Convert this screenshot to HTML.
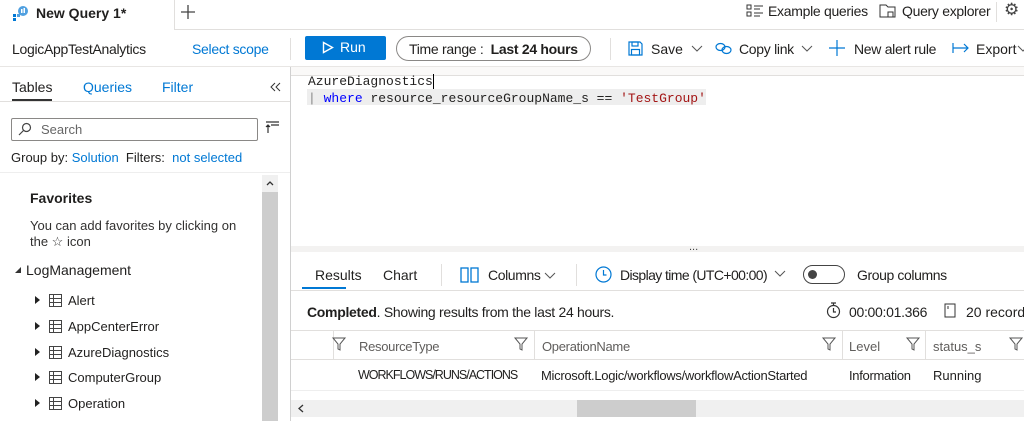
<!DOCTYPE html><html><head><style>
body{margin:0;width:1024px;height:421px;overflow:hidden;background:#fff;font-family:"Liberation Sans",sans-serif;color:#201f1e;position:relative}
.a{position:absolute;white-space:nowrap}
.b{color:#0078d4}
.m{font-family:"Liberation Mono",monospace;font-size:13px}
.s13{font-size:13px}.s14{font-size:14px}
.hl{position:absolute;height:1px;background:#e1dfdd}
.vl{position:absolute;width:1px;background:#e1dfdd}
svg{position:absolute}
.tr{position:absolute;left:33px;font-size:13px;white-space:nowrap}
</style></head><body>
<div class="hl" style="left:174px;top:29px;width:850px"></div>
<div class="vl" style="left:174px;top:0;height:30px"></div>
<svg style="left:12px;top:5px" width="16" height="16" viewBox="0 0 16 16"><rect x="1" y="9" width="3" height="3" fill="#0078d4"/><rect x="1" y="13" width="3" height="3" fill="#0078d4"/><rect x="5" y="9" width="3" height="3" fill="#50a0e0"/><circle cx="11" cy="6" r="5" fill="#50a0e0"/><rect x="9" y="4" width="1.5" height="4" fill="#fff"/><rect x="11.5" y="3" width="1.5" height="5" fill="#fff"/></svg>
<div class="a s14" style="left:36px;top:5px;font-weight:bold">New Query 1*</div>
<svg style="left:181px;top:5px" width="14" height="14" viewBox="0 0 14 14" stroke="#444" stroke-width="1.3"><path d="M7 0v14M0 7h14"/></svg>
<svg style="left:746px;top:4px" width="18" height="14" viewBox="0 0 18 14" fill="none" stroke="#333"><rect x="1" y="1" width="4" height="4"/><rect x="1" y="8" width="4" height="4"/><path d="M8 2h9M8 5h6M8 9h9M8 12h6"/></svg>
<div class="a s14" style="left:768px;top:3px;letter-spacing:-0.3px">Example queries</div>
<svg style="left:879px;top:3px" width="18" height="16" viewBox="0 0 18 16" fill="none" stroke="#333"><path d="M1 2h6l2 2h7v10H1z"/><rect x="9" y="9" width="5" height="5"/></svg>
<div class="a s14" style="left:902px;top:3px;letter-spacing:-0.3px">Query explorer</div>
<div class="vl" style="left:996px;top:2px;height:20px"></div>
<div class="a" style="left:1004px;top:0px;font-size:17px;color:#444">⚙</div>
<div class="a s14" style="left:12px;top:41px;letter-spacing:-0.3px">LogicAppTestAnalytics</div>
<div class="a s14 b" style="left:192px;top:41px;letter-spacing:-0.3px">Select scope</div>
<div class="vl" style="left:290px;top:38px;height:22px"></div>
<div class="a" style="left:305px;top:36px;width:81px;height:24px;background:#0078d4;border-radius:2px"></div>
<svg style="left:322px;top:41px" width="12" height="13" viewBox="0 0 12 13"><path d="M1.5 1.5L10.5 6.5L1.5 11.5Z" fill="none" stroke="#fff" stroke-width="1.4"/></svg>
<div class="a s14" style="left:340px;top:39px;color:#fff">Run</div>
<div class="a" style="left:396px;top:36px;width:193px;height:23px;border:1px solid #8a8886;border-radius:13px"></div>
<div class="a s14" style="left:409px;top:41px;letter-spacing:-0.3px">Time range : &nbsp;<b>Last 24 hours</b></div>
<div class="vl" style="left:610px;top:38px;height:22px"></div>
<svg style="left:628px;top:41px" width="15" height="15" viewBox="0 0 15 15" fill="none" stroke="#0078d4" stroke-width="1.2"><path d="M1 1h11l2 2v11H1z"/><rect x="4" y="1" width="6" height="4"/><rect x="3.5" y="8.5" width="8" height="5.5"/></svg>
<div class="a s14" style="left:651px;top:41px">Save</div>
<svg style="left:691px;top:45px" width="12" height="7" viewBox="0 0 12 7" fill="none" stroke="#555"><path d="M1 1l5 5 5-5"/></svg>
<svg style="left:715px;top:42px" width="17" height="13" viewBox="0 0 17 13" fill="none" stroke="#0078d4" stroke-width="1.2"><ellipse cx="5.5" cy="5" rx="4.5" ry="3.5"/><ellipse cx="11.5" cy="8" rx="4.5" ry="3.5"/></svg>
<div class="a s14" style="left:739px;top:41px;letter-spacing:-0.3px">Copy link</div>
<svg style="left:801px;top:45px" width="12" height="7" viewBox="0 0 12 7" fill="none" stroke="#555"><path d="M1 1l5 5 5-5"/></svg>
<svg style="left:829px;top:40px" width="16" height="16" viewBox="0 0 16 16" stroke="#0078d4" stroke-width="1.2"><path d="M8 0v16M0 8h16"/></svg>
<div class="a s14" style="left:854px;top:41px;letter-spacing:-0.3px">New alert rule</div>
<svg style="left:952px;top:42px" width="18" height="12" viewBox="0 0 18 12" fill="none" stroke="#0078d4" stroke-width="1.2"><path d="M1 1v10M1 6h15M12 2l4 4-4 4"/></svg>
<div class="a s14" style="left:976px;top:41px">Export</div>
<svg style="left:1017px;top:45px" width="12" height="7" viewBox="0 0 12 7" fill="none" stroke="#555"><path d="M1 1l5 5 5-5"/></svg>
<div class="hl" style="left:0;top:66px;width:1024px;background:#e8e6e4"></div>
<div class="a" style="left:290px;top:67px;width:734px;height:8px;background:#faf9f8"></div>
<div class="hl" style="left:290px;top:75px;width:734px"></div>
<div class="vl" style="left:290px;top:67px;height:354px;background:#d0d0d0"></div>
<div class="a s14" style="left:12px;top:79px">Tables</div>
<div class="a" style="left:12px;top:99px;width:40px;height:2px;background:#333"></div>
<div class="a s14 b" style="left:83px;top:79px">Queries</div>
<div class="a s14 b" style="left:162px;top:79px">Filter</div>
<svg style="left:270px;top:82px" width="12" height="10" viewBox="0 0 12 10" fill="none" stroke="#333"><path d="M5 1L1 5l4 4M10 1L6 5l4 4"/></svg>
<div class="hl" style="left:0;top:101px;width:290px"></div>
<div class="a" style="left:11px;top:118px;width:245px;height:21px;border:1px solid #8a8886;border-radius:2px"></div>
<svg style="left:18px;top:122px" width="14" height="14" viewBox="0 0 14 14" fill="none" stroke="#444" stroke-width="1.2"><circle cx="8.5" cy="5.5" r="4"/><path d="M5.5 8.5L1 13"/></svg>
<div class="a s13" style="left:41px;top:122px;color:#666">Search</div>
<svg style="left:265px;top:121px" width="14" height="12" viewBox="0 0 14 12" stroke="#333" stroke-width="1.2"><path d="M1 1h13M6 4h8M3 4v8M1 6l2-2 2 2"/></svg>
<div class="a s13" style="left:11px;top:150px">Group by: <span class="b">Solution</span> &nbsp;Filters: &nbsp;<span class="b">not selected</span></div>
<div class="hl" style="left:0;top:172px;width:290px;background:#eee"></div>
<div class="a" style="left:262px;top:175px;width:16px;height:246px;background:#f0f0f0"></div>
<div class="a" style="left:262px;top:192px;width:16px;height:229px;background:#cdcdcd"></div>
<svg style="left:266px;top:181px" width="8" height="5" viewBox="0 0 8 5" fill="none" stroke="#333" stroke-width="1.3"><path d="M1 4l3-3 3 3"/></svg>
<div class="a s14" style="left:30px;top:190px;font-weight:bold">Favorites</div>
<div class="a s13" style="left:30px;top:218px;color:#323130">You can add favorites by clicking on</div>
<div class="a s13" style="left:30px;top:234px;color:#323130">the ☆ icon</div>
<svg style="left:15px;top:267px" width="6" height="6" viewBox="0 0 6 6"><path d="M6 0V6H0z" fill="#333"/></svg>
<div class="a s14" style="left:26px;top:262px">LogManagement</div>
<svg style="left:0;top:0" width="70" height="421"><g fill="#222"><path d="M35 296l5 4-5 4z"/><path d="M35 322l5 4-5 4z"/><path d="M35 348l5 4-5 4z"/><path d="M35 373l5 4-5 4z"/><path d="M35 399l5 4-5 4z"/></g><g fill="none" stroke="#444"><rect x="49.5" y="294.5" width="12" height="12"/><path d="M49.5 298.5h12M49.5 302.5h12M53.5 294.5v12"/><rect x="49.5" y="320.5" width="12" height="12"/><path d="M49.5 324.5h12M49.5 328.5h12M53.5 320.5v12"/><rect x="49.5" y="346.5" width="12" height="12"/><path d="M49.5 350.5h12M49.5 354.5h12M53.5 346.5v12"/><rect x="49.5" y="371.5" width="12" height="12"/><path d="M49.5 375.5h12M49.5 379.5h12M53.5 371.5v12"/><rect x="49.5" y="397.5" width="12" height="12"/><path d="M49.5 401.5h12M49.5 405.5h12M53.5 397.5v12"/></g></svg>
<div class="tr" style="left:68px;top:293px">Alert</div>
<div class="tr" style="left:68px;top:319px">AppCenterError</div>
<div class="tr" style="left:68px;top:345px">AzureDiagnostics</div>
<div class="tr" style="left:68px;top:370px">ComputerGroup</div>
<div class="tr" style="left:68px;top:396px">Operation</div>
<div class="a" style="left:307px;top:89px;width:399px;height:16px;background:#eeeeee"></div>
<div class="a m" style="left:308px;top:73px;line-height:17px">AzureDiagnostics<span style="border-left:1px solid #000"></span><br><span style="color:#888">|</span> <span style="color:#0000ff">where</span> resource_resourceGroupName_s == <span style="color:#a31515">'TestGroup'</span></div>
<div class="a" style="left:291px;top:246px;width:733px;height:6px;background:#f3f2f1"></div>
<div class="a" style="left:689px;top:241px;font-size:11px;color:#444">...</div>
<div class="a s14" style="left:315px;top:267px">Results</div>
<div class="a" style="left:302px;top:287px;width:44px;height:2px;background:#0078d4"></div>
<div class="a s14" style="left:383px;top:267px">Chart</div>
<div class="vl" style="left:441px;top:264px;height:22px"></div>
<svg style="left:460px;top:267px" width="20" height="16" viewBox="0 0 20 16" fill="none" stroke="#0078d4" stroke-width="1.3"><rect x="1" y="1" width="7" height="14"/><rect x="11" y="1" width="7" height="14"/></svg>
<div class="a s14" style="left:488px;top:267px;letter-spacing:-0.4px">Columns</div>
<svg style="left:544px;top:272px" width="12" height="7" viewBox="0 0 12 7" fill="none" stroke="#555"><path d="M1 1l5 5 5-5"/></svg>
<div class="vl" style="left:576px;top:264px;height:22px"></div>
<svg style="left:595px;top:266px" width="17" height="17" viewBox="0 0 17 17" fill="none" stroke="#0078d4" stroke-width="1.2"><circle cx="8.5" cy="8.5" r="7.5"/><path d="M8.5 4v5h3"/></svg>
<div class="a s14" style="left:620px;top:267px;letter-spacing:-0.6px">Display time (UTC+00:00)</div>
<svg style="left:774px;top:270px" width="12" height="7" viewBox="0 0 12 7" fill="none" stroke="#555"><path d="M1 1l5 5 5-5"/></svg>
<div class="a" style="left:803px;top:265px;width:40px;height:17px;border:1px solid #444;border-radius:10px"></div>
<div class="a" style="left:808px;top:270px;width:9px;height:9px;border-radius:5px;background:#444"></div>
<div class="a s14" style="left:857px;top:267px;letter-spacing:-0.4px">Group columns</div>
<div class="hl" style="left:291px;top:290px;width:733px"></div>
<div class="a s14" style="left:307px;top:304px;letter-spacing:-0.3px"><b>Completed</b>. Showing results from the last 24 hours.</div>
<svg style="left:826px;top:302px" width="15" height="17" viewBox="0 0 15 17" fill="none" stroke="#333" stroke-width="1.2"><circle cx="7.5" cy="9.5" r="6"/><path d="M5 1h5M7.5 1v2.5M7.5 6v4h2.5"/></svg>
<div class="a s14" style="left:849px;top:304px;letter-spacing:-0.3px">00:00:01.366</div>
<svg style="left:944px;top:303px" width="12" height="15" viewBox="0 0 12 15" fill="none" stroke="#333"><rect x="1" y="1" width="10" height="13"/><path d="M4 3v3"/></svg>
<div class="a s14" style="left:966px;top:304px">20 records</div>
<div class="hl" style="left:291px;top:330px;width:733px"></div>
<div class="hl" style="left:291px;top:359px;width:733px"></div>
<div class="hl" style="left:291px;top:390px;width:733px;background:#eee"></div>
<div class="vl" style="left:333px;top:331px;height:28px"></div>
<div class="vl" style="left:534px;top:331px;height:28px"></div>
<div class="vl" style="left:842px;top:331px;height:28px"></div>
<div class="vl" style="left:925px;top:331px;height:28px"></div>
<svg style="left:0;top:0" width="1024" height="421"><g fill="none" stroke="#555" stroke-width="1"><path d="M333 338h12l-5 6v6l-2-1v-5z"/><path d="M515 338h12l-5 6v6l-2-1v-5z"/><path d="M823 338h12l-5 6v6l-2-1v-5z"/><path d="M907 338h12l-5 6v6l-2-1v-5z"/><path d="M1010 338h12l-5 6v6l-2-1v-5z"/></g></svg>
<div class="a s13" style="left:359px;top:339px;color:#605e5c;letter-spacing:-0.3px">ResourceType</div>
<div class="a s13" style="left:542px;top:339px;color:#605e5c;letter-spacing:-0.3px">OperationName</div>
<div class="a s13" style="left:849px;top:339px;color:#605e5c">Level</div>
<div class="a s13" style="left:933px;top:339px;color:#605e5c">status_s</div>
<div class="a" style="left:358px;top:368px;font-size:12.5px;letter-spacing:-1px">WORKFLOWS/RUNS/ACTIONS</div>
<div class="a s13" style="left:541px;top:368px;letter-spacing:-0.3px">Microsoft.Logic/workflows/workflowActionStarted</div>
<div class="a s13" style="left:849px;top:368px;letter-spacing:-0.3px">Information</div>
<div class="a s13" style="left:933px;top:368px">Running</div>
<div class="a" style="left:291px;top:400px;width:733px;height:17px;background:#f0f0f0"></div>
<div class="a" style="left:577px;top:400px;width:119px;height:17px;background:#cdcdcd"></div>
<svg style="left:298px;top:404px" width="6" height="9" viewBox="0 0 6 9" fill="none" stroke="#333" stroke-width="1.3"><path d="M5 1L1 4.5 5 8"/></svg>
</body></html>
